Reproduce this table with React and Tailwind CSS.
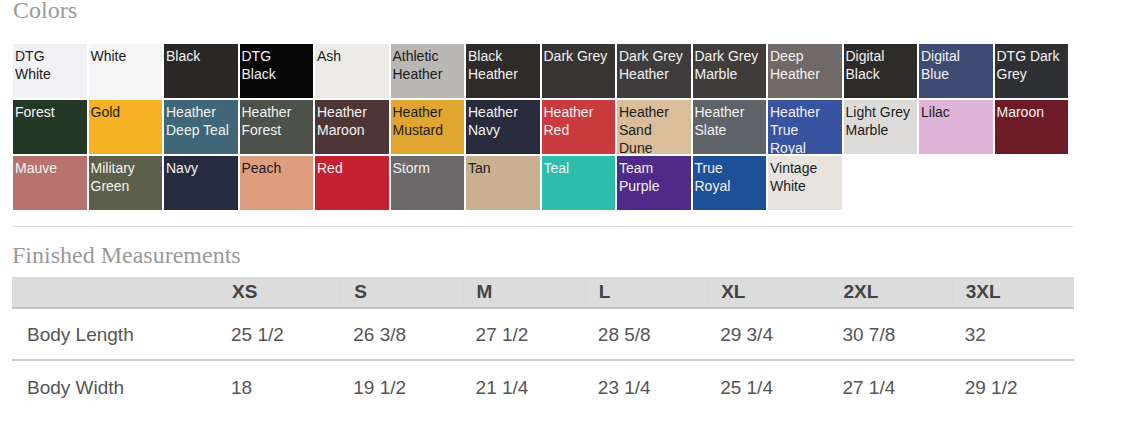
import React from 'react'

const swatches = [
  { name: 'DTG White', bg: '#f1f1f5', dark: true },
  { name: 'White', bg: '#f6f6f6', dark: true },
  { name: 'Black', bg: '#2b2727' },
  { name: 'DTG Black', bg: '#060606' },
  { name: 'Ash', bg: '#ecebe7', dark: true },
  { name: 'Athletic Heather', bg: '#bab7b5', dark: true },
  { name: 'Black Heather', bg: '#2e2b2a' },
  { name: 'Dark Grey', bg: '#373434' },
  { name: 'Dark Grey Heather', bg: '#3e3c3c' },
  { name: 'Dark Grey Marble', bg: '#403d3d' },
  { name: 'Deep Heather', bg: '#6f6967' },
  { name: 'Digital Black', bg: '#2c2b28' },
  { name: 'Digital Blue', bg: '#3e4b73' },
  { name: 'DTG Dark Grey', bg: '#2f3034' },

  { name: 'Forest', bg: '#243826' },
  { name: 'Gold', bg: '#f6b224', dark: true },
  { name: 'Heather Deep Teal', bg: '#3f6778' },
  { name: 'Heather Forest', bg: '#4c5149' },
  { name: 'Heather Maroon', bg: '#4f3636' },
  { name: 'Heather Mustard', bg: '#e0a62f', dark: true },
  { name: 'Heather Navy', bg: '#272b3c' },
  { name: 'Heather Red', bg: '#c93b3e' },
  { name: 'Heather Sand Dune', bg: '#d9be99', dark: true },
  { name: 'Heather Slate', bg: '#5d6368' },
  { name: 'Heather True Royal', bg: '#3853a0' },
  { name: 'Light Grey Marble', bg: '#dddbd9', dark: true },
  { name: 'Lilac', bg: '#e0b4d9', dark: true },
  { name: 'Maroon', bg: '#6d1b27' },

  { name: 'Mauve', bg: '#b8736f' },
  { name: 'Military Green', bg: '#5c604b' },
  { name: 'Navy', bg: '#262c3f' },
  { name: 'Peach', bg: '#de9d7c', dark: true },
  { name: 'Red', bg: '#c62130' },
  { name: 'Storm', bg: '#6c696a' },
  { name: 'Tan', bg: '#c9b091', dark: true },
  { name: 'Teal', bg: '#2ebdab' },
  { name: 'Team Purple', bg: '#4e2b88' },
  { name: 'True Royal', bg: '#1d5097' },
  { name: 'Vintage White', bg: '#e7e4de', dark: true },
]

const sizes = ['XS', 'S', 'M', 'L', 'XL', '2XL', '3XL']

const rows = [
  { label: 'Body Length', values: ['25 1/2', '26 3/8', '27 1/2', '28 5/8', '29 3/4', '30 7/8', '32'] },
  { label: 'Body Width', values: ['18', '19 1/2', '21 1/4', '23 1/4', '25 1/4', '27 1/4', '29 1/2'] },
]

export default function App() {
  return (
    <div className="bg-white min-h-[441px] w-[1133px] px-[12px] font-['Liberation_Sans',Arial,sans-serif]">
      {/* Colors */}
      <h2 className="font-['Liberation_Serif','Times_New_Roman',serif] text-[24px] leading-[20px] text-[#9a9a9a] pl-[1px]">
        Colors
      </h2>
      <div className="mt-[24px] ml-[1px] w-[1055px] grid grid-cols-14 auto-rows-[54px] gap-[2px]">
        {swatches.map((s) => (
          <div
            key={s.name}
            className={`overflow-hidden pt-[3px] pl-[2px] pr-[6px] text-[14px] leading-[18px] ${
              s.dark ? 'text-[#1b1b1b]' : 'text-[#f2f2f2]'
            }`}
            style={{ backgroundColor: s.bg }}
          >
            {s.name}
          </div>
        ))}
      </div>

      <div className="mt-[16px] w-[1061px] h-px bg-[#dedede]" />

      {/* Finished Measurements */}
      <h2 className="mt-[18px] font-['Liberation_Serif','Times_New_Roman',serif] text-[24px] leading-[20px] text-[#9a9a9a]">
        Finished Measurements
      </h2>
      <div className="mt-[12px] w-[1062px]">
        <div className="grid grid-cols-[206px_repeat(7,1fr)] h-[32px] bg-[#dcdcdc] border-b-2 border-[#c4c4c4]">
          <div />
          {sizes.map((s) => (
            <div
              key={s}
              className="flex items-center pl-[13px] border-l border-[#d8d8d8] text-[19px] font-bold text-[#444444]"
            >
              {s}
            </div>
          ))}
        </div>
        {rows.map((r, i) => (
          <div
            key={r.label}
            className={`grid grid-cols-[206px_repeat(7,1fr)] h-[52px] pt-[3px] text-[19px] text-[#555555] ${
              i === 0 ? 'border-b-2 border-[#cfcfcf]' : ''
            }`}
          >
            <div className="flex items-center pl-[15px]">{r.label}</div>
            {r.values.map((v, j) => (
              <div key={j} className="flex items-center pl-[13px]">
                {v}
              </div>
            ))}
          </div>
        ))}
      </div>
    </div>
  )
}
